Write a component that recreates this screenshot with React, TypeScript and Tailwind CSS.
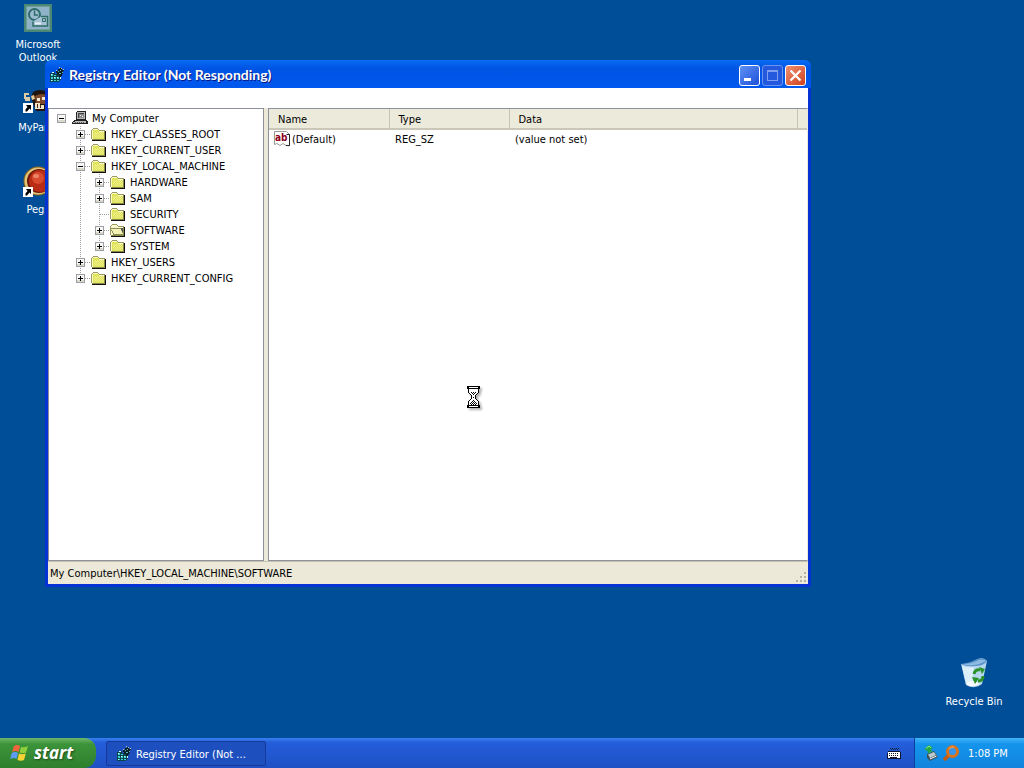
import type { ReactNode } from 'react';

type TreeNode = {
  label: string;
  level: number;
  state: 'open' | 'closed' | 'leaf';
  last?: boolean;
  selected?: boolean;
};

const treeNodes: TreeNode[] = [
  { label: 'HKEY_CLASSES_ROOT', level: 1, state: 'closed' },
  { label: 'HKEY_CURRENT_USER', level: 1, state: 'closed' },
  { label: 'HKEY_LOCAL_MACHINE', level: 1, state: 'open' },
  { label: 'HARDWARE', level: 2, state: 'closed' },
  { label: 'SAM', level: 2, state: 'closed' },
  { label: 'SECURITY', level: 2, state: 'leaf' },
  { label: 'SOFTWARE', level: 2, state: 'closed', selected: true },
  { label: 'SYSTEM', level: 2, state: 'closed', last: true },
  { label: 'HKEY_USERS', level: 1, state: 'closed' },
  { label: 'HKEY_CURRENT_CONFIG', level: 1, state: 'closed', last: true },
];

// Dotted connector lines between tree rows
function Branch({ x = true, last = false }: { x?: boolean; last?: boolean }) {
  return (
    <svg width="19" height="16" viewBox="0 0 19 16" aria-hidden="true" shapeRendering="crispEdges" className="shrink-0">
      <path d={last ? 'M9.5 0V8' : 'M9.5 0V16'} stroke="#a0a0a0" strokeDasharray="1 1" />
      {x && <path d="M10 8.5H19" stroke="#a0a0a0" strokeDasharray="1 1" />}
    </svg>
  );
}

function Expander({ open, label }: { open: boolean; label: string }) {
  return (
    <button type="button" aria-label={label} className="absolute top-1 left-1.25 size-2.25">
      <svg width="9" height="9" viewBox="0 0 9 9" shapeRendering="crispEdges">
        <rect x="0.5" y="0.5" width="8" height="8" fill="#f8f7f3" stroke="#9a9fa6" />
        <path d="M1 6.5H8M1 7.5H8" stroke="#dcd8cc" />
        <path d={open ? 'M2 4.5H7' : 'M2 4.5H7M4.5 2V7'} stroke="#000" />
      </svg>
    </button>
  );
}

function FolderIcon({ open }: { open?: boolean }) {
  return (
    <svg width="16" height="16" viewBox="0 0 16 16" shapeRendering="crispEdges" aria-hidden="true" className="shrink-0">
      <path d="M0 13V4H1V3H2V2H7V3H8V4H14V14H1V13Z" fill="#9a9a62" />
      <path d="M1 13V4H2V3H7V4H8V5H14V13Z" fill={open ? '#f6f5cf' : '#dfe35a'} />
      <path d="M2 3.5H7M1.5 4V13M8 5.5H13" stroke="#fcfbc9" />
      {open ? (
        <>
          <path d="M0 6H11V7H12V9H13V11H14V13H3V11H2V9H1V8H0Z" fill="#8d8d58" />
          <path d="M1 7H11V9H12V11H13V12H4V11H3V9H2V8H1Z" fill="#f3f1b4" />
          <path d="M11 6H14V12H13V10H12V8H11Z" fill="#555" />
        </>
      ) : (
        <path d="M3 7.500H13M4 8.500H13M3 9.500H13M4 10.500H13M3 11.500H13M4 6.500H13" stroke="#eff08c" strokeDasharray="1 1" />
      )}
      <path d="M14.500 5V14M1 14.500H15" stroke="#111" />
      <path d="M13.500 5V13M2 13.500H14" stroke="#8a8a4c" />
    </svg>
  );
}

function ComputerIcon() {
  return (
    <svg width="16" height="16" viewBox="0 0 16 16" shapeRendering="crispEdges" aria-hidden="true" className="shrink-0">
      <path d="M5 1H14V10H4V2H5Z" fill="#222" />
      <path d="M5 2H13V9H5Z" fill="#b9b9b9" />
      <path d="M6 3H12V8H6Z" fill="#444" />
      <path d="M7 4H12V8H7Z" fill="#8a8a8a" />
      <path d="M8 5H9V6H8ZM10 6H11V7H10Z" fill="#eee" />
      <path d="M2 10H15V11H16V14H0V12H1V11H2Z" fill="#222" />
      <path d="M3 11H14V12H3ZM1 12H14V13H1Z" fill="#b9b9b9" />
      <path d="M3 12.500H12" stroke="#555" strokeDasharray="1 1" />
    </svg>
  );
}

function RegistryIcon() {
  return (
    <svg width="16" height="16" viewBox="0 0 16 16" shapeRendering="crispEdges" aria-hidden="true" className="shrink-0">
      <path d="M1 6H3V5H6V7H8V8H12V13H11V14H10V15H1Z" fill="#08454f" />
      <path d="M2 7h2v2h-2zM5 8h2v1h-2zM2 10h2v2h-2zM5 10h2v2h-2zM8 10h2v2h-2zM2 13h2v1h-2zM5 13h2v1h-2zM8 13h2v1h-2z" fill="#3fd5d5" />
      <path d="M3 5h2v1h-2zM2 7h1v1h-1zM5 10h1v1h-1zM8 10h1v1h-1zM11 9h1v3h-1zM2 13h1v1h-1z" fill="#d4ffff" />
      <path d="M7 4H9V2H11V1H13V3H15V4H14V7H13V9H12V10H10V8H8V6H7Z" fill="#0d2227" />
      <path d="M9 4h1v1h-1zM11 3h1v1h-1zM10 6h2v1h-2zM13 5h1v1h-1z" fill="#5fb8ba" />
      <path d="M7 3h1v1h-1zM10 0h1v1h-1zM14 2h1v1h-1zM12 1h1v1h-1z" fill="#b5d2c4" />
    </svg>
  );
}

function StringValueIcon() {
  return (
    <svg width="16" height="16" viewBox="0 0 16 16" aria-hidden="true" className="shrink-0">
      <path d="M0.5 0.5H12.5L15.5 3.5V15L11 14L9 12.500L6 14.500L3 12.500L0.5 13.5Z" fill="#fff" stroke="#9a9a9a" />
      <path d="M12.500 3.500H15.500V14.500H12" fill="none" stroke="#222" />
      <text x="1" y="10" fontSize="10" fontWeight="700" fontFamily="DejaVu Sans Condensed" fill="#8b0020">ab</text>
    </svg>
  );
}

function OutlookIcon() {
  return (
    <svg width="28" height="28" viewBox="0 0 28 28" aria-hidden="true">
      <rect width="28" height="28" fill="#4b8776" />
      <rect x="2.5" y="2.5" width="23" height="23" fill="#8fb2c8" stroke="#6f9f91" />
      <circle cx="10.5" cy="10.5" r="5.500" fill="#9dbcd2" stroke="#2f6c68" strokeWidth="2" />
      <path d="M10.5 6.500V11H14" fill="none" stroke="#2f6c68" strokeWidth="1.5" />
      <path d="M17 12.5H23.5V22H9V17.5" fill="#a6c3d6" stroke="#2f6c68" strokeWidth="1.5" />
      <path d="M11 19.500H17" stroke="#e8f2f5" strokeWidth="2" />
      <path d="M18.500 14.500H21.500V17.500H18.500Z" stroke="#2f6c68" fill="#9dbcd2" />
    </svg>
  );
}

function Shortcut({ y }: { y: number }) {
  return (
    <g transform={`translate(1 ${y})`}>
      <path d="M0 0H10V10H0Z" fill="#fff" />
      <path d="M3 2H8V7L6.500 5.500L4 8.500L2.500 8.500L2.500 6.500L4.500 4Z" fill="#000" />
    </g>
  );
}

function PartyIcon() {
  return (
    <svg width="32" height="32" viewBox="0 0 32 32" aria-hidden="true">
      <path d="M10 17Q8 7 18 7Q28 7 29 17L25 28H14Z" fill="#22150f" />
      <path d="M13 13Q20 9 27 13L25 21H14Z" fill="#7d4a2b" />
      <path d="M15 15H18V18H15ZM20 14H24V17H20Z" fill="#f6ead3" />
      <path d="M2 10H7V12H4V14H8V18H3V16H2Z" fill="#dccba5" />
      <path d="M9 13L12 12L13 16L10 17Z" fill="#e7c795" />
      <path d="M13 20H18V22H22V26H13Z" fill="#efe2c5" />
      <path d="M15 21H16V25H15ZM18 22H19V25H18Z" fill="#4b2b1a" />
      <Shortcut y={20} />
    </svg>
  );
}

function PeggleIcon() {
  return (
    <svg width="32" height="32" viewBox="0 0 32 32" aria-hidden="true">
      <circle cx="16" cy="16" r="14.500" fill="#8c651f" />
      <circle cx="16" cy="16" r="13.500" fill="#e0c478" />
      <circle cx="17" cy="16" r="12" fill="#6e170b" />
      <circle cx="18" cy="16" r="11" fill="#b92c16" />
      <circle cx="16" cy="13" r="6" fill="#d84b2e" />
      <ellipse cx="14" cy="11" rx="3" ry="2" fill="#ec8468" />
      <Shortcut y={22} />
    </svg>
  );
}

function RecycleIcon() {
  return (
    <svg width="32" height="32" viewBox="0 0 32 32" aria-hidden="true">
      <path d="M3 7Q11 8 20 2Q26 0 29 4L24 27Q17 33 8 28Z" fill="#b5d6ef" />
      <path d="M3 7Q12 6 19 2Q25 0 29 4Q26 9 17 9Q9 10 3 7Z" fill="#5b94c8" />
      <path d="M5 7Q14 7 21 3Q26 2 28 4Q23 7 16 8Q10 9 5 7Z" fill="#8dbbe2" />
      <path d="M4 9Q10 11 16 10L14 29Q10 29 8 27Z" fill="#dceefa" />
      <path d="M9 26Q14 21 22 27Q16 31 9 28Z" fill="#f5fbff" />
      <g fill="none" stroke="#2b9227" strokeWidth="3">
        <path d="M16 17Q17 12 22 13" />
        <path d="M25 19Q25 24 20 24" />
      </g>
      <path d="M21 10L27 12L24 17ZM21 21L17 27L14 20Z" fill="#2b9227" />
    </svg>
  );
}

function WindowsFlag() {
  return (
    <svg width="20" height="20" viewBox="0 0 20 20" aria-hidden="true">
      <path d="M4 3Q7 1 10 3L8.500 9Q5.500 7 2 9Z" fill="#f2653a" />
      <path d="M11 4Q14 5 18 3L16 9.500Q13 11 9.500 9.500Z" fill="#8fcf3c" />
      <path d="M1.800 10Q5 8 8 10L6.500 16Q4 14 0 16Z" fill="#5c9cf5" />
      <path d="M9 10.500Q12 12 15.800 10.500L14 17Q11 18.500 7.500 17Z" fill="#fbd335" />
    </svg>
  );
}

function Hourglass() {
  return (
    <svg width="13" height="22" viewBox="0 0 13 22" shapeRendering="crispEdges" aria-hidden="true" className="drop-shadow-[2px_2px_1px_rgba(0,0,0,0.3)]">
      <path d="M2 3H11V7L8 10V12L11 15V19H2V15L5 12V10L2 7Z" fill="#fff" />
      <path d="M0 0H13V3H0ZM0 19H13V22H0Z" fill="#000" />
      <path d="M2 1H11V2H2ZM2 20H11V21H2Z" fill="#fff" />
      <path d="M1 3h1v4h-1zM11 3h1v4h-1zM2 7h1v1h-1zM10 7h1v1h-1zM3 8h1v1h-1zM9 8h1v1h-1zM4 9h1v4h-1zM8 9h1v4h-1zM3 13h1v1h-1zM9 13h1v1h-1zM2 14h1v1h-1zM10 14h1v1h-1zM1 15h1v4h-1zM11 15h1v4h-1z" fill="#000" />
      <path d="M4 6h1v1h-1zM6 6h1v1h-1zM8 6h1v1h-1zM5 7h1v1h-1zM7 7h1v1h-1zM6 8h1v1h-1zM6 11h1v1h-1zM6 14h1v1h-1zM5 15h1v1h-1zM7 15h1v1h-1zM4 16h1v1h-1zM6 16h1v1h-1zM8 16h1v1h-1zM3 17h1v1h-1zM5 17h1v1h-1zM7 17h1v1h-1zM9 17h1v1h-1zM4 18h1v1h-1zM6 18h1v1h-1zM8 18h1v1h-1z" fill="#000" />
    </svg>
  );
}

function KeyboardIcon() {
  return (
    <svg width="16" height="16" viewBox="0 0 16 16" shapeRendering="crispEdges" aria-hidden="true">
      <path d="M4 3.500H13M5 4.500H12" stroke="#123" strokeDasharray="1 1" />
      <path d="M2 6H14V7H15V14H1V8H2Z" fill="#0c1430" />
      <path d="M2 7H14V13H2Z" fill="#fff" />
      <path d="M3 8.500H13M3 10.500H13" stroke="#0c1430" strokeDasharray="1 1" />
      <path d="M4 12.500H11" stroke="#0c1430" />
    </svg>
  );
}

function SafelyRemoveIcon() {
  return (
    <svg width="16" height="16" viewBox="0 0 16 16" aria-hidden="true">
      <path d="M4 9L11 6L15 12L7 16L4 13Z" fill="#3f525c" />
      <path d="M5 9.500L11 7L13 10L7 13Z" fill="#b9c9cf" />
      <path d="M7 14L13.500 11" stroke="#fff" />
      <path d="M1 4L6 0L10 3L8 4L9 7L5 8L4 5Z" fill="#27a744" />
      <path d="M3 3.500L6 1L8 3" stroke="#8fed8c" fill="none" />
    </svg>
  );
}

function SearchIcon() {
  return (
    <svg width="16" height="16" viewBox="0 0 16 16" aria-hidden="true">
      <path d="M6 10L1 15" stroke="#c75b0d" strokeWidth="3.500" />
      <circle cx="9.500" cy="6.500" r="5" fill="#3795ec" stroke="#d9731b" strokeWidth="3" />
      <path d="M6 4Q8 1.500 11 2" stroke="#ffb060" fill="none" />
    </svg>
  );
}

function DesktopIcon({ icon, label }: { icon: ReactNode; label: string }) {
  return (
    <button type="button" className="flex w-16 flex-col items-center gap-1.5 text-center leading-3.25 text-white">
      {icon}
      <span>{label}</span>
    </button>
  );
}

function TreeRow({ node }: { node: TreeNode }) {
  return (
    <li className="flex h-4 items-center">
      <span className="w-4.75 shrink-0" />
      {node.level === 2 && <Branch x={false} />}
      <span className="relative flex">
        <Branch last={node.last && node.level === 2 ? true : node.last} />
        {node.state !== 'leaf' && <Expander open={node.state === 'open'} label={`Toggle ${node.label}`} />}
      </span>
      <span className="pl-px"><FolderIcon open={node.selected} /></span>
      <span className="pt-0.5 pl-1">{node.label}</span>
    </li>
  );
}

function RegistryTree() {
  return (
    <nav aria-label="Registry keys" className="w-54 shrink-0 border border-[#8d9199] bg-white pl-0.75 pt-px">
      <ul>
        <li className="flex h-4 items-center">
          <span className="relative h-4 w-4.75">
            <Expander open label="Toggle My Computer" />
          </span>
          <span className="pl-px"><ComputerIcon /></span>
          <span className="pt-0.5 pl-1">My Computer</span>
        </li>
        {treeNodes.map((node) => (
          <TreeRow key={node.label} node={node} />
        ))}
      </ul>
    </nav>
  );
}

function ValueList() {
  return (
    <div className="min-w-0 flex-1 border border-[#8d9199] border-r-[#ece9d8] bg-white">
      <table className="w-full table-fixed border-collapse text-left">
        <colgroup>
          <col className="w-30" />
          <col className="w-30" />
          <col />
          <col className="w-2.5" />
        </colgroup>
        <thead>
          <tr className="h-5 border-b-2 border-[#cbc7b8] bg-[#ebeadb]">
            <th className="border-r border-[#c7c5b2] pt-0.5 pl-2.25 font-normal">Name</th>
            <th className="border-r border-[#c7c5b2] pt-0.5 pl-2.25 font-normal">Type</th>
            <th className="border-r border-[#c7c5b2] pt-0.5 pl-2.25 font-normal">Data</th>
            <td />
          </tr>
        </thead>
        <tbody>
          <tr className="h-4.5">
            <td className="pl-1.25">
              <span className="flex items-center gap-0.5">
                <StringValueIcon />
                <span className="pt-0.5">(Default)</span>
              </span>
            </td>
            <td className="pt-0.5 pl-1.5">REG_SZ</td>
            <td className="pt-0.5 pl-1.5">(value not set)</td>
            <td />
          </tr>
        </tbody>
      </table>
    </div>
  );
}

function TitleBar() {
  return (
    <header className="flex h-7 items-center gap-1 rounded-t-md bg-linear-to-b from-[#0a6cf5] via-[#0054e3] via-30% to-[#0058ee] pr-1.25 pl-1 pt-0.5">
      <RegistryIcon />
      <h1 className="flex-1 font-[Lato,sans-serif] text-[14px] leading-4 font-bold text-white [text-shadow:1px_1px_#0a1883]">
        Registry Editor (Not Responding)
      </h1>
      <div className="flex gap-0.5">
        <button type="button" aria-label="Minimize" className="size-5.25 rounded-[3px] border border-white bg-linear-to-br from-[#5f8ff5] to-[#1d50d8]">
          <svg width="19" height="19" viewBox="0 0 19 19" shapeRendering="crispEdges"><path d="M4 12H11V15H4Z" fill="#fff" /></svg>
        </button>
        <button type="button" aria-label="Maximize" disabled className="size-5.25 rounded-[3px] border border-[#6d95f0] bg-[#2459de]">
          <svg width="19" height="19" viewBox="0 0 19 19" shapeRendering="crispEdges"><path d="M4.500 5.500H14.500V14.500H4.500ZM4 4.500H15" fill="none" stroke="#7f9ff2" /></svg>
        </button>
        <button type="button" aria-label="Close" className="size-5.25 rounded-[3px] border border-white bg-linear-to-br from-[#ee8e70] to-[#cf3f14]">
          <svg width="19" height="19" viewBox="0 0 19 19"><path d="M4.500 4.500L14.500 14.500M14.500 4.500L4.500 14.500" stroke="#fff" strokeWidth="2.200" /></svg>
        </button>
      </div>
    </header>
  );
}

function RegistryWindow() {
  return (
    <section aria-label="Registry Editor" className="absolute top-15 left-11.25 flex h-131.75 w-191.5 flex-col rounded-t-lg bg-[#0833d4]">
      <TitleBar />
      <div className="mx-0.75 mb-0.75 flex flex-1 flex-col bg-[#ece9d8]">
        <div className="h-5 bg-white" />
        <div className="flex flex-1 gap-1">
          <RegistryTree />
          <ValueList />
        </div>
        <footer className="flex h-5.75 items-center justify-between border-t border-[#c5c2b0] pl-0.5">
          <span className="pt-0.5">My Computer\HKEY_LOCAL_MACHINE\SOFTWARE</span>
          <svg width="13" height="13" viewBox="0 0 13 13" shapeRendering="crispEdges" aria-hidden="true" className="self-end">
            <path d="M9 1h2v2h-2zM5 5h2v2h-2zM9 5h2v2h-2zM1 9h2v2h-2zM5 9h2v2h-2zM9 9h2v2h-2z" fill="#b8b4a3" />
            <path d="M11 3h1v1h-1zM7 7h1v1h-1zM11 7h1v1h-1zM3 11h1v1h-1zM7 11h1v1h-1zM11 11h1v1h-1z" fill="#fff" />
          </svg>
        </footer>
      </div>
    </section>
  );
}

function Taskbar() {
  return (
    <footer className="flex h-7.5 shrink-0 items-stretch bg-linear-to-b from-[#3a80f0] via-[#245edb] via-15% to-[#1f50c4] text-white">
      <button
        type="button"
        className="flex w-24 items-center gap-1 rounded-r-xl bg-linear-to-b from-[#6fb86c] via-[#3c943a] via-20% to-[#2f7f2d] pl-2.5 font-['Open_Sans',sans-serif] text-[17px] leading-5 font-bold italic [text-shadow:1px_1px_2px_#1b4a1a]"
      >
        <WindowsFlag />
        start
      </button>
      <button
        type="button"
        className="mt-0.75 mb-0.5 ml-2.5 flex w-40 items-center gap-1 rounded-xs border border-[#173a9a] bg-[#1e4fbf] pl-2.25 whitespace-nowrap"
      >
        <RegistryIcon />
        <span className="pt-0.5">Registry Editor (Not ...</span>
      </button>
      <div className="ml-auto flex items-center pr-3">
        <KeyboardIcon />
      </div>
      <div className="flex w-27.5 items-center gap-1 border-l border-[#0b3f9e] bg-linear-to-b from-[#3fb4f8] via-[#1494ec] via-20% to-[#1284dd] pl-2">
        <SafelyRemoveIcon />
        <SearchIcon />
        <time className="pt-0.5 pl-1.25">1:08 PM</time>
      </div>
    </footer>
  );
}

export default function App() {
  return (
    <div className="flex h-screen flex-col overflow-hidden bg-[#004e98] font-['DejaVu_Sans_Condensed','DejaVu_Sans',sans-serif] text-[11px] leading-4 text-black">
      <main className="relative flex-1">
        <div className="absolute top-1 left-1.5"><DesktopIcon icon={<OutlookIcon />} label="Microsoft Outlook" /></div>
        <div className="absolute top-20.75 left-1.5"><DesktopIcon icon={<PartyIcon />} label="MyParty" /></div>
        <div className="absolute top-41.25 left-1.5"><DesktopIcon icon={<PeggleIcon />} label="Pegs" /></div>
        <div className="absolute right-4.5 bottom-7.5"><DesktopIcon icon={<RecycleIcon />} label="Recycle Bin" /></div>
        <RegistryWindow />
        <div className="absolute top-96.5 left-116.75"><Hourglass /></div>
      </main>
      <Taskbar />
    </div>
  );
}
